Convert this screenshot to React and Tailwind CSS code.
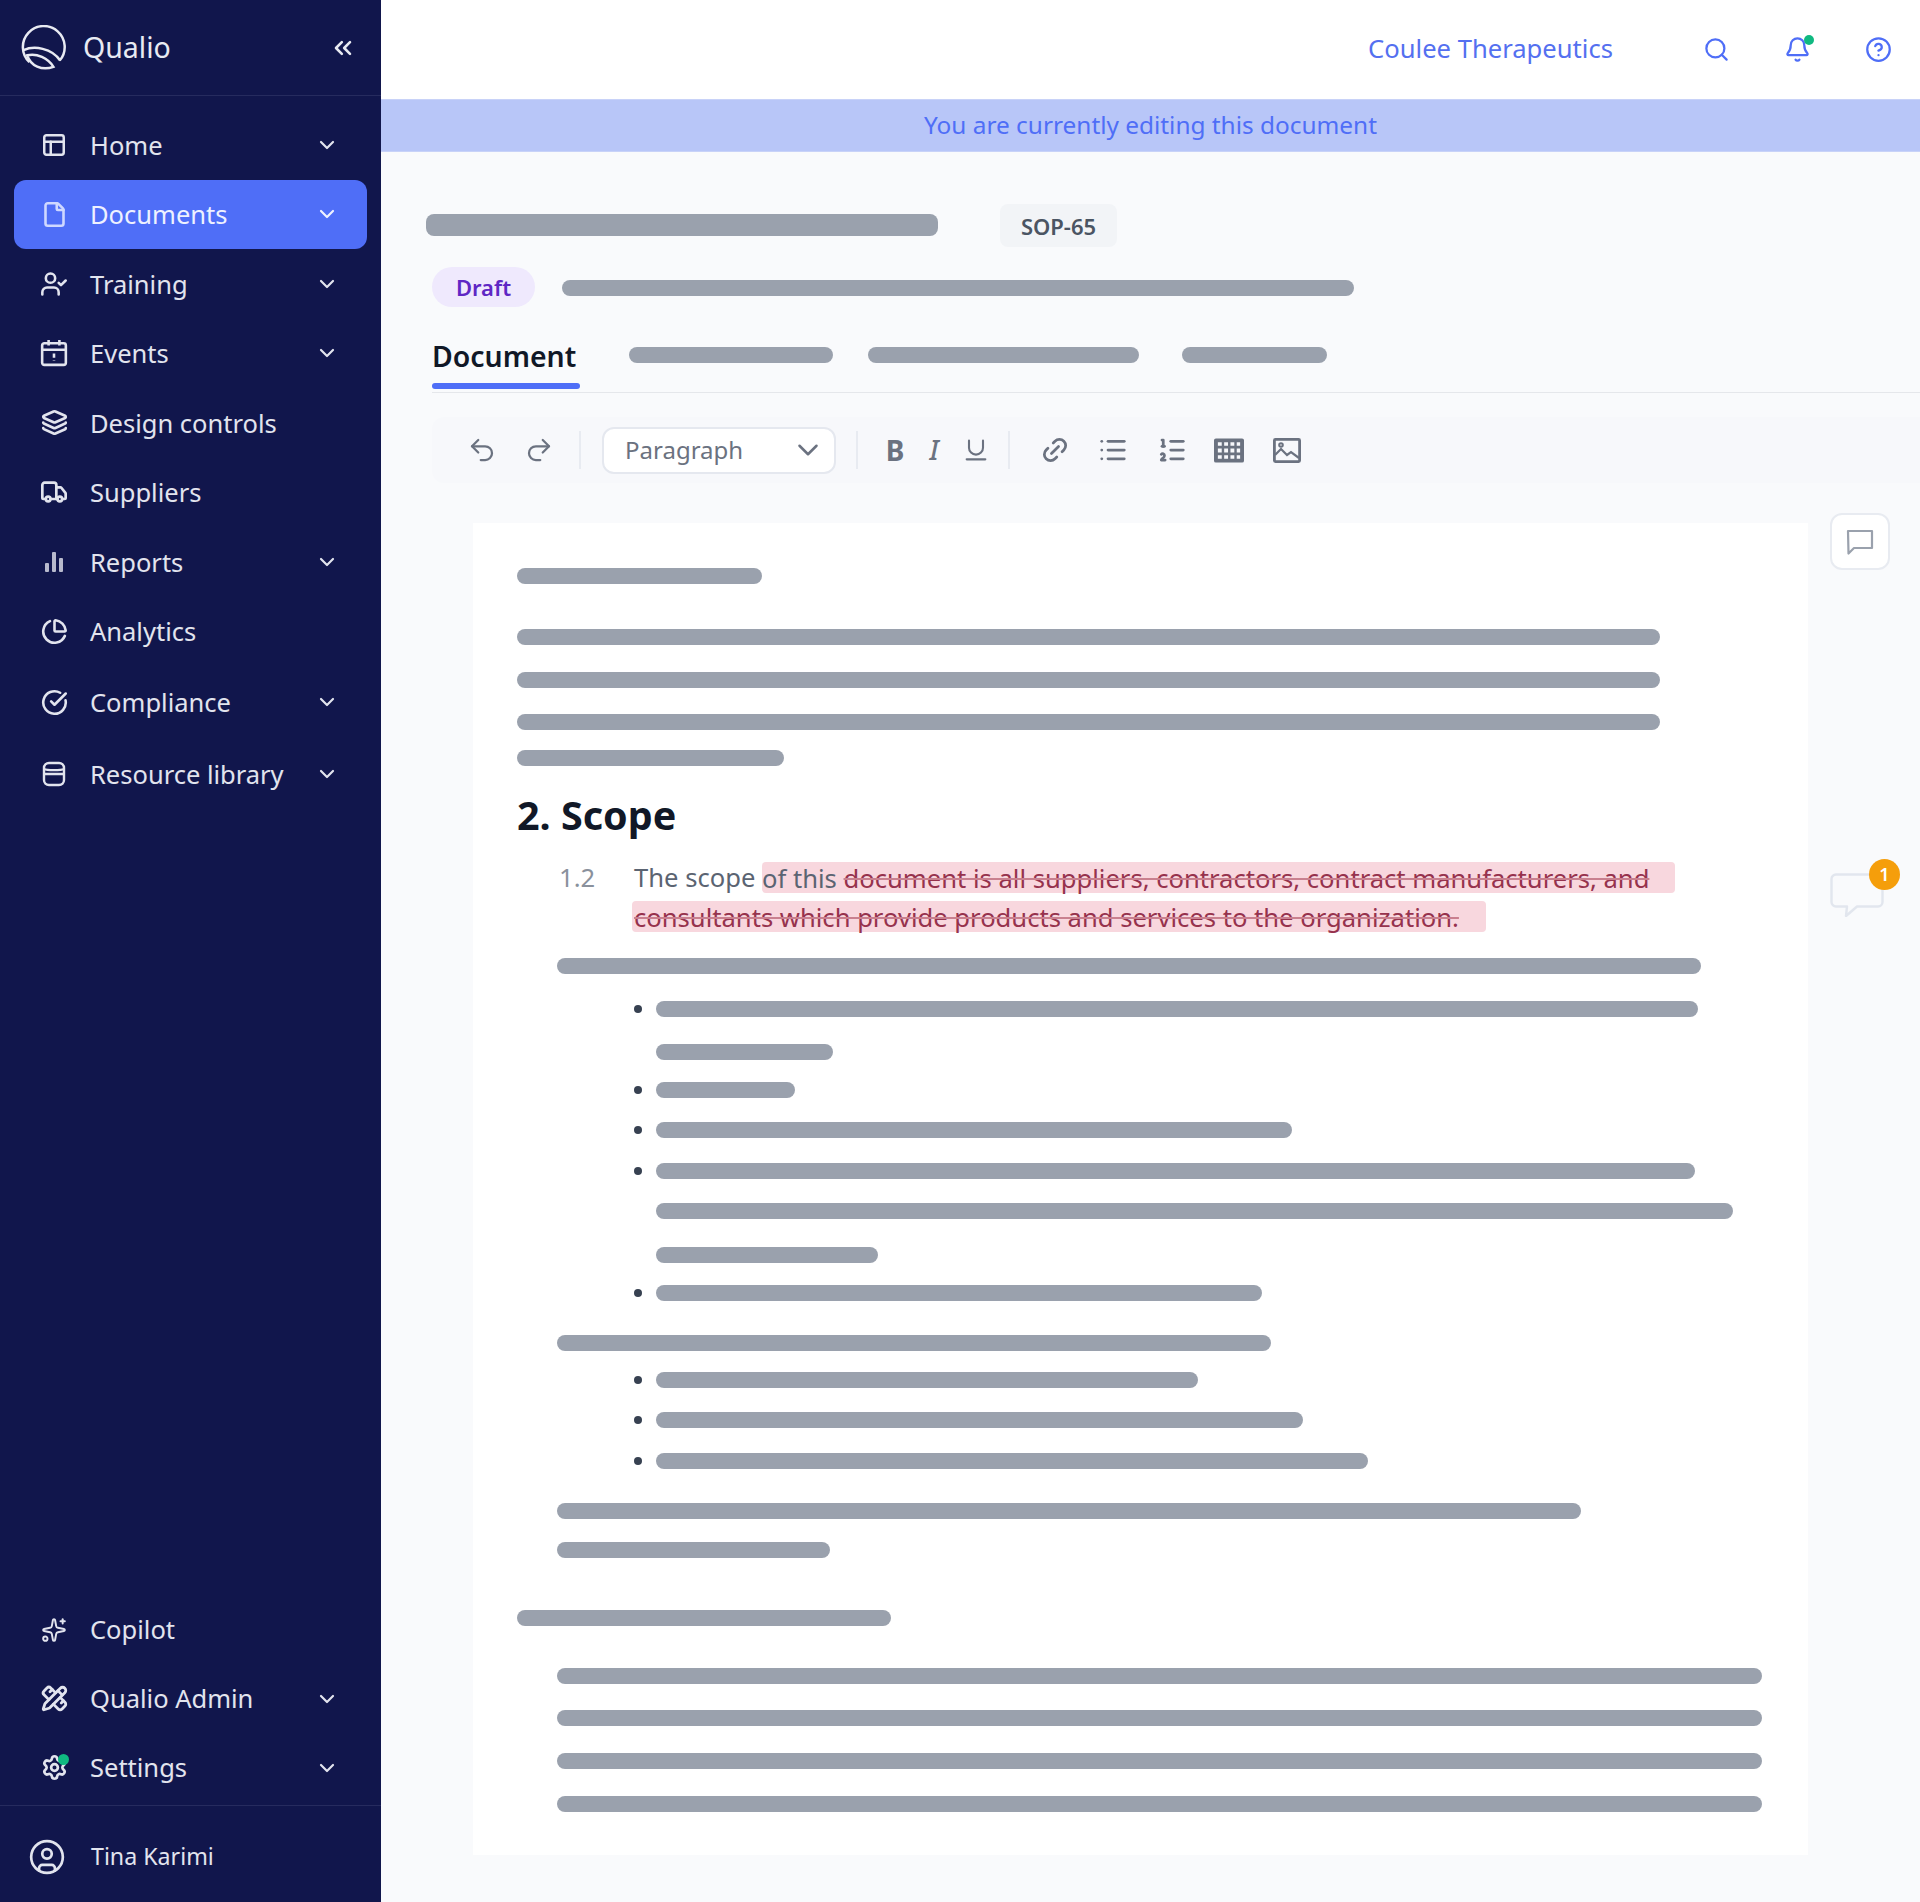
import {
  Bell,
  ChartPie,
  ChevronDown,
  ChevronsLeft,
  CircleCheckBig,
  CircleHelp,
  CircleUser,
  File,
  Layers,
  Link2,
  List,
  ListOrdered,
  PanelsTopLeft,
  PencilRuler,
  Redo2,
  Search,
  Settings,
  Sparkles,
  Truck,
  Underline,
  Undo2,
  UserCheck,
} from "lucide-react";

function Logo() {
  return (
    <svg viewBox="0 0 44 44" className="h-[46px] w-[46px] shrink-0 text-[#e8eaf2]" fill="none" stroke="currentColor" strokeWidth="2.4">
      <path d="M8 35.5A20 20 0 1 1 37 34" />
      <path d="M2.5 24c10-4.5 27-2 35 10" />
      <path d="M6 29c9-2.5 20 3 25 11-11 4-22-1-25-11Z" />
    </svg>
  );
}

function CalendarIcon() {
  return (
    <svg viewBox="0 0 26 26" className="h-[28px] w-[28px]" fill="none" stroke="currentColor" strokeWidth="2.4">
      <rect x="2" y="4" width="22" height="20" rx="2" />
      <path d="M2 10h22M8 1v5M18 1v5" />
      <path d="M13 13.5v4M13 20v.5" />
    </svg>
  );
}

function DatabaseIcon() {
  return (
    <svg viewBox="0 0 26 26" className="h-[26px] w-[26px]" fill="none" stroke="currentColor" strokeWidth="2.4">
      <rect x="3" y="2" width="20" height="22" rx="5" />
      <path d="M3 13h20M3 8c3 1.500 17 1.500 20 0" />
    </svg>
  );
}

function BarsIcon() {
  return (
    <svg viewBox="0 0 26 26" className="h-[26px] w-[26px] opacity-80" fill="currentColor">
      <rect x="4" y="14" width="4" height="9" rx="1" />
      <rect x="11" y="3" width="4" height="20" rx="1" />
      <rect x="18" y="9" width="4" height="14" rx="1" />
    </svg>
  );
}

function TableIcon() {
  return (
    <svg viewBox="0 0 31 25" className="h-[25px] w-[31px]" fill="#6b7280">
      <path fillRule="evenodd" d="M2 0h27a2 2 0 0 1 2 2v21a2 2 0 0 1-2 2H2a2 2 0 0 1-2-2V2a2 2 0 0 1 2-2Zm2 4v3.500h4V4H4Zm6.500 0v3.500h4V4h-4ZM17 4v3.500h4V4h-4Zm6.500 0v3.500h3.500V4h-3.500ZM4 10.500v4h4v-4H4Zm6.500 0v4h4v-4h-4Zm6.500 0v4h4v-4h-4Zm6.500 0v4h3.500v-4h-3.500ZM4 17.500V21h4v-3.500H4Zm6.500 0V21h4v-3.500h-4Zm6.500 0V21h4v-3.500h-4Zm6.500 0V21h3.500v-3.500h-3.500Z" />
    </svg>
  );
}

function ImageIcon() {
  return (
    <svg viewBox="0 0 28 25" className="h-[25px] w-[28px]" fill="none" stroke="#6b7280" strokeWidth="2.8">
      <rect x="1.4" y="1.4" width="25.2" height="22.2" rx="1" />
      <circle cx="8" cy="7" r="1.800" strokeWidth="2" />
      <path d="m2 17 6-6 6 6 4-3 8 6" strokeWidth="2.2" />
    </svg>
  );
}

function CommentIcon() {
  return (
    <svg viewBox="0 0 28 26" className="h-[26px] w-[28px]" fill="none" stroke="currentColor" strokeWidth="2.2" strokeLinejoin="round">
      <path d="M2 2h24v17H8l-5.500 5.500Z" />
    </svg>
  );
}

function EmptyComment() {
  return (
    <svg viewBox="0 0 54 44" className="h-[44px] w-[54px]" fill="none" stroke="currentColor" strokeWidth="2.4" strokeLinejoin="round">
      <path d="M6 1.500h42a4.500 4.500 0 0 1 4.500 4.500v23a4.500 4.500 0 0 1-4.500 4.500H27L16 43l1-9.500H6A4.500 4.500 0 0 1 1.500 29V6A4.500 4.500 0 0 1 6 1.500Z" />
    </svg>
  );
}

function NavItem({ icon, label, chevron, active, height = "h-[69.5px]", dot }) {
  return (
    <div className={`mx-[14px] flex items-center rounded-xl pl-[26px] pr-[28px] text-[25.5px] ${height} ${active ? "bg-[#4f6ef7] text-[#eef1ff]" : "text-[#e2e4ee]"}`}>
      <span className="relative flex w-[28px] justify-center">
        {icon}
        {dot && <span className="absolute right-[-1px] top-[0px] h-[11px] w-[11px] rounded-full bg-[#10b981]" />}
      </span>
      <span className="ml-[22px] flex-1">{label}</span>
      {chevron && <ChevronDown size={24} strokeWidth={2.2} />}
    </div>
  );
}

function Bar({ className }) {
  return <div className={`h-4 rounded-lg bg-[#9aa1ad] ${className}`} />;
}

function Bullet({ mt, w, noDot }) {
  return (
    <div className={`ml-[117px] flex items-center ${mt}`}>
      <span className="flex w-[22px] shrink-0 items-center">
        {!noDot && <span className="h-[8px] w-[8px] rounded-full bg-[#374151]" />}
      </span>
      <div className={`h-4 rounded-lg bg-[#9aa1ad] ${w}`} />
    </div>
  );
}

function ToolButton({ className, children }) {
  return <span className={`flex w-[30px] shrink-0 items-center justify-center text-[#6b7280] ${className}`}>{children}</span>;
}

function ToolDivider({ className }) {
  return <span className={`h-[38px] w-[2px] shrink-0 bg-[#e8ebf1] ${className}`} />;
}

export default function App() {
  return (
    <div className="flex h-[1902px] w-[1920px] overflow-hidden bg-[#f9fafc] font-['Noto_Sans',sans-serif]">
      <aside className="flex w-[381px] shrink-0 flex-col bg-[#11164c]">
        <div className="flex h-[96px] shrink-0 items-center border-b border-[#262b5e] pl-[21px] pr-[24px]">
          <Logo />
          <span className="ml-[16px] flex-1 text-[28.5px] text-[#e8eaf2]">Qualio</span>
          <ChevronsLeft size={28} strokeWidth={2.2} className="text-[#e8eaf2]" />
        </div>

        <nav className="flex flex-1 flex-col pt-[14px]">
          <NavItem icon={<PanelsTopLeft size={26} strokeWidth={2.3} />} label="Home" chevron />
          <NavItem icon={<File size={27} strokeWidth={2.3} className="text-[#cfd8ff]" />} label="Documents" chevron active />
          <NavItem icon={<UserCheck size={28} strokeWidth={2.2} />} label="Training" chevron />
          <NavItem icon={<CalendarIcon />} label="Events" chevron />
          <NavItem icon={<Layers size={27} strokeWidth={2.4} />} label="Design controls" />
          <NavItem icon={<Truck size={28} strokeWidth={2.3} />} label="Suppliers" />
          <NavItem icon={<BarsIcon />} label="Reports" chevron />
          <NavItem icon={<ChartPie size={27} strokeWidth={2.3} />} label="Analytics" />
          <NavItem icon={<CircleCheckBig size={27} strokeWidth={2.3} />} label="Compliance" chevron height="h-[72px]" />
          <NavItem icon={<DatabaseIcon />} label="Resource library" chevron height="h-[72px]" />
        </nav>

        <div className="flex flex-col pb-[3px]">
          <NavItem icon={<Sparkles size={26} strokeWidth={1.8} />} label="Copilot" height="h-[69px]" />
          <NavItem icon={<PencilRuler size={27} strokeWidth={2.5} />} label="Qualio Admin" chevron height="h-[69px]" />
          <NavItem icon={<Settings size={27} strokeWidth={2.4} />} label="Settings" chevron height="h-[69px]" dot />
        </div>
        <div className="flex h-[97px] shrink-0 items-center border-t border-[#262b5e] pl-[28px] pt-[5px] text-[23.2px] text-[#e2e4ee]">
          <CircleUser size={38} strokeWidth={1.7} />
          <span className="ml-[25px]">Tina Karimi</span>
        </div>
      </aside>

      <main className="flex min-w-0 flex-1 flex-col">
        <header className="flex h-[99px] shrink-0 items-center justify-end bg-white pr-[28px] text-[#4f6ef7]">
          <span className="text-[25.6px] text-[#5470f0]">Coulee Therapeutics</span>
          <Search size={27} className="ml-[90px]" />
          <span className="relative ml-[54px]">
            <Bell size={27} />
            <span className="absolute right-[-3px] top-[-1px] h-[10px] w-[10px] rounded-full bg-[#10b981]" />
          </span>
          <CircleHelp size={27} className="ml-[54px]" />
        </header>
        <div className="flex h-[53px] shrink-0 items-center justify-center border-y border-[#c8d2f8] bg-[#b8c6f8] text-[24.4px] text-[#4f6ef7]">
          You are currently editing this document
        </div>

        <div className="ml-[45px] mt-[52px] flex h-[43px] items-center">
          <div className="-mt-[2px] h-[22px] w-[512px] rounded-lg bg-[#9aa1ad]" />
          <span className="ml-[62px] flex h-[43px] w-[117px] items-center justify-center rounded-lg bg-[#f2f4f7] pt-[2px] text-[22px] font-semibold text-[#4b5563]">SOP-65</span>
        </div>

        <div className="ml-[51px] mt-[20px] flex h-[40px] items-center">
          <span className="flex h-[40px] w-[103px] items-center justify-center rounded-full bg-[#efe9fd] text-[22px] font-semibold text-[#5f27c4]">Draft</span>
          <div className="ml-[27px] mt-[1px] h-4 w-[792px] rounded-lg bg-[#9aa1ad]" />
        </div>

        <div className="ml-[51px] mt-[24px] flex items-start border-b border-[#e5e7eb]">
          <div className="flex w-[148px] flex-col">
            <span className="mt-[7px] text-[28.4px] font-semibold leading-[36px] text-[#111827]">Document</span>
            <span className="mb-[3px] mt-[9px] h-[6px] rounded-full bg-[#4f6ef7]" />
          </div>
          <div className="ml-[49px] mt-[16px] h-4 w-[204px] rounded-lg bg-[#9aa1ad]" />
          <div className="ml-[35px] mt-[16px] h-4 w-[271px] rounded-lg bg-[#9aa1ad]" />
          <div className="ml-[43px] mt-[16px] h-4 w-[145px] rounded-lg bg-[#9aa1ad]" />
        </div>

        <div className="ml-[51px] mt-[24px] flex h-[66px] shrink-0 items-center rounded-l-xl bg-[#f7f8fb] pl-[35px]">
          <ToolButton><Undo2 size={34} strokeWidth={1.8} /></ToolButton>
          <ToolButton className="ml-[27px]"><Redo2 size={34} strokeWidth={1.8} /></ToolButton>
          <ToolDivider className="ml-[25px]" />
          <div className="ml-[21px] flex h-[47px] w-[234px] items-center justify-between rounded-xl border-2 border-[#e5e8ef] bg-white pl-[21px] pr-[9px] text-[24px] text-[#6b7280]">
            Paragraph
            <ChevronDown size={34} strokeWidth={1.8} />
          </div>
          <ToolDivider className="ml-[20px]" />
          <ToolButton className="ml-[22px] text-[28px] font-bold text-[#4b5563]">B</ToolButton>
          <ToolButton className="ml-[9px] text-[27px] font-medium italic">I</ToolButton>
          <ToolButton className="ml-[12px]"><Underline size={28} strokeWidth={1.8} /></ToolButton>
          <ToolDivider className="ml-[17px]" />
          <ToolButton className="ml-[30px]"><Link2 size={32} strokeWidth={2.2} className="-rotate-45" /></ToolButton>
          <ToolButton className="ml-[28px]"><List size={32} strokeWidth={2.2} /></ToolButton>
          <ToolButton className="ml-[29px]"><ListOrdered size={32} strokeWidth={2.2} /></ToolButton>
          <ToolButton className="ml-[27px]"><TableIcon /></ToolButton>
          <ToolButton className="ml-[28px]"><ImageIcon /></ToolButton>
        </div>

        <div className="ml-[92px] mt-[40px] flex items-start">
          <article className="flex w-[1335px] flex-col bg-white pb-[43px] pl-[44px] pt-[45px]">
            <Bar className="w-[245px]" />
            <Bar className="mt-[45px] w-[1143px]" />
            <Bar className="mt-[27px] w-[1143px]" />
            <Bar className="mt-[26px] w-[1143px]" />
            <Bar className="mt-[20px] w-[267px]" />

            <h2 className="mt-[24px] h-[50px] text-[39.5px] font-bold leading-[50px] text-[#111827]">2. Scope</h2>

            <div className="mt-[19px] text-[25.6px] leading-[40px] text-[#5b6472]">
              <div className="ml-[42px] flex">
                <span className="-mt-[1px] w-[75px] shrink-0 text-[#8a919c]">1.2</span>
                <span className="-mt-[1px] whitespace-pre">The scope </span>
                <span className="my-[3px] flex h-[31px] w-[913px] items-center rounded-sm bg-[#f8d7de] pt-[2px] leading-[31px] whitespace-pre">
                  <span>of this </span>
                  <span className="text-[#96324d] line-through decoration-[#c9808f]">document is all suppliers, contractors, contract manufacturers, and</span>
                </span>
              </div>
              <div className="ml-[115px] flex">
                <span className="my-[3px] flex h-[31px] w-[854px] items-center rounded-sm bg-[#f8d7de] pl-[2px] pt-[2px] leading-[31px] text-[#96324d] line-through decoration-[#c9808f]">
                  consultants which provide products and services to the organization.
                </span>
              </div>
            </div>

            <Bar className="ml-[40px] mt-[23px] w-[1144px]" />
            <Bullet mt="mt-[27px]" w="w-[1042px]" />
            <Bullet mt="mt-[27px]" w="w-[177px]" noDot />
            <Bullet mt="mt-[22px]" w="w-[139px]" />
            <Bullet mt="mt-[24px]" w="w-[636px]" />
            <Bullet mt="mt-[25px]" w="w-[1039px]" />
            <Bullet mt="mt-[24px]" w="w-[1077px]" noDot />
            <Bullet mt="mt-[28px]" w="w-[222px]" noDot />
            <Bullet mt="mt-[22px]" w="w-[606px]" />
            <Bar className="ml-[40px] mt-[34px] w-[714px]" />
            <Bullet mt="mt-[21px]" w="w-[542px]" />
            <Bullet mt="mt-[24px]" w="w-[647px]" />
            <Bullet mt="mt-[25px]" w="w-[712px]" />
            <Bar className="ml-[40px] mt-[34px] w-[1024px]" />
            <Bar className="ml-[40px] mt-[23px] w-[273px]" />
            <Bar className="mt-[52px] w-[374px]" />
            <Bar className="ml-[40px] mt-[42px] w-[1205px]" />
            <Bar className="ml-[40px] mt-[26px] w-[1205px]" />
            <Bar className="ml-[40px] mt-[27px] w-[1205px]" />
            <Bar className="ml-[40px] mt-[27px] w-[1205px]" />
          </article>

          <div className="-mt-[10px] ml-[22px] flex flex-col">
            <span className="flex h-[57px] w-[60px] items-center justify-center rounded-xl border-2 border-[#e8ebf1] bg-white text-[#9aa1ad]">
              <CommentIcon />
            </span>
            <span className="relative mt-[303px] flex h-[44px] w-[54px] text-[#e2e6ee]">
              <EmptyComment />
              <span className="absolute right-[-16px] top-[-14px] flex h-[31px] w-[31px] items-center justify-center rounded-full bg-[#f59e0b] text-[18px] font-semibold text-white">1</span>
            </span>
          </div>
        </div>
      </main>
    </div>
  );
}
